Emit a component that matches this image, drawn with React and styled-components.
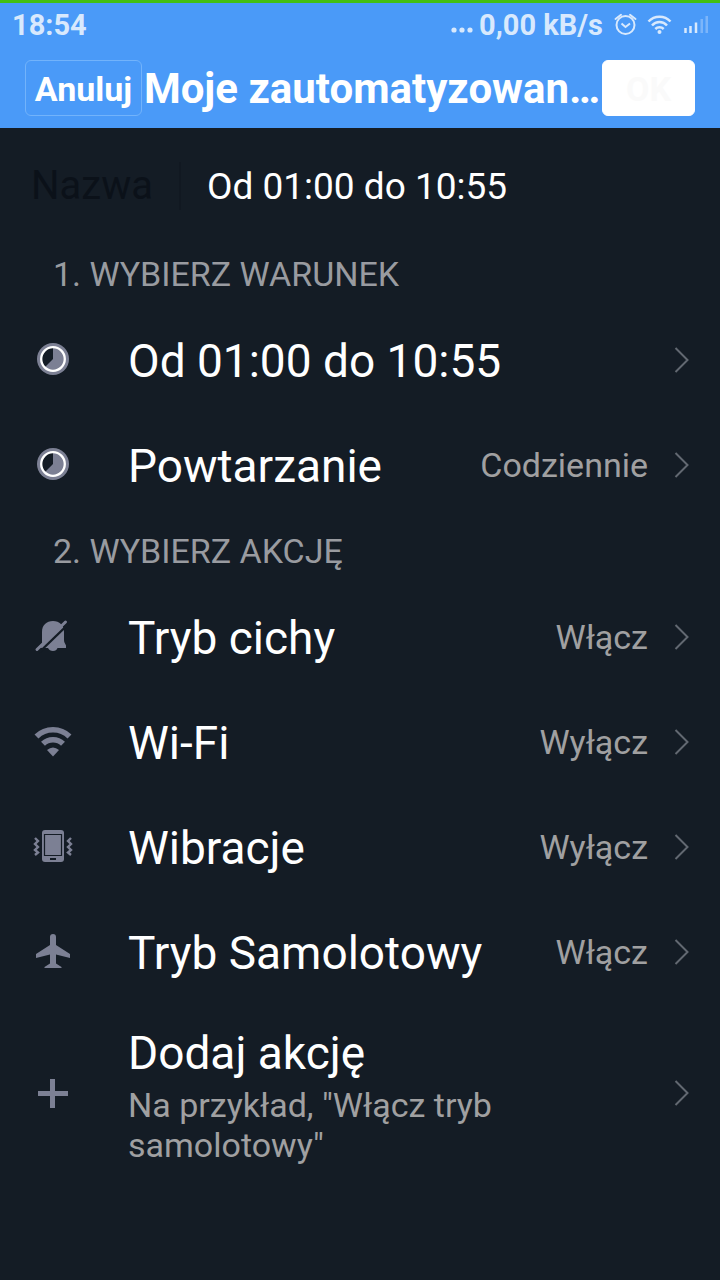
import styled, { createGlobalStyle } from "styled-components";

const GlobalStyle = createGlobalStyle`
  * {
    box-sizing: border-box;
  }

  body {
    margin: 0;
    background: #141c25;
    font-family: Roboto, "Noto Sans", sans-serif;
  }
`;

const Page = styled.div`
  min-height: 100vh;
  color: #fff;
  background: #141c25;
`;

const Header = styled.header`
  height: 128px;
  border-top: 3px solid #43c012;
  background: #4a9af8;
`;

const StatusBar = styled.div`
  display: flex;
  align-items: center;
  height: 44px;
  padding: 0 12px;

  font-size: 29px;
  font-weight: 700;
  line-height: 34px;
  color: #d8e9fd;
`;

const Clock = styled.time`
  flex: 1;
`;

const StatusGroup = styled.div`
  display: flex;
  align-items: center;

  svg {
    display: block;
  }
`;

const Speed = styled.span`
  margin: 0 11px 0 6px;
`;

const TitleBar = styled.div`
  display: flex;
  align-items: center;
  padding: 13px 25px 0;
`;

const Title = styled.h1`
  flex: 1;
  min-width: 0;
  margin: 0;
  padding-top: 2px;

  font-size: 42px;
  font-weight: 700;
  line-height: 54px;
  text-align: center;
  white-space: nowrap;
`;

const HeaderButton = styled.button`
  flex: none;
  height: 56px;
  width: ${(props) => (props.$primary ? 93 : 117)}px;
  padding: 2px 0 0;

  font: 700 34px Roboto, sans-serif;
  color: ${(props) => (props.$primary ? "#fafafa" : "#fff")};

  background: ${(props) => (props.$primary ? "#fff" : "transparent")};
  border: 1px solid ${(props) => (props.$primary ? "#fff" : "#72b3fb")};
  border-radius: 6px;

  cursor: pointer;
`;

const NameField = styled.div`
  display: flex;
  align-items: center;
  height: 112px;
  padding: 4px 31px 0;

  font-size: 37px;
`;

const NameLabel = styled.label`
  width: 150px;
  font-size: 40px;
  line-height: 48px;
  color: #0b1119;
  border-right: 2px solid #111821;
`;

const NameInput = styled.input`
  flex: 1;
  min-width: 0;
  padding: 0 0 0 26px;

  font: inherit;
  color: #fff;

  background: transparent;
  border: 0;
  outline: 0;
`;

const SectionTitle = styled.h2`
  margin: 0;
  padding: 14px 53px 13px;

  font-size: 34px;
  font-weight: 400;
  line-height: 40px;
  color: #999ba0;
`;

const Section = styled.section`
  display: flex;
  flex-direction: column;
`;

const Row = styled.button`
  display: flex;
  align-items: center;
  width: 100%;
  min-height: 105px;
  padding: ${(props) => (props.$tall ? "17px 31px 17px 33px" : "0 31px 0 33px")};

  font-family: inherit;
  text-align: left;
  color: inherit;

  background: none;
  border: 0;

  cursor: pointer;

  svg {
    display: block;
    flex: none;
  }
`;

const RowText = styled.span`
  flex: 1;
  min-width: 0;
  padding-left: 55px;
`;

const RowTitle = styled.span`
  display: block;
  padding-top: 2px;
  font-size: 46px;
  line-height: 60px;
`;

const RowHint = styled.span`
  display: block;
  max-width: 400px;
  margin-top: 2px;
  font-size: 34px;
  line-height: 40px;
  color: #a0a0a1;
`;

const RowValue = styled.span`
  margin-right: 26px;
  font-size: 34px;
  line-height: 40px;
  color: #a0a0a1;
`;

const IconSvg = ({ children }) => (
  <svg width="40" height="40" viewBox="0 0 40 40" fill="#7c8094" aria-hidden="true">
    {children}
  </svg>
);

const TimeIcon = () => (
  <IconSvg>
    <circle cx="20" cy="19" r="16" />
    <circle cx="20" cy="19" r="12" fill="#141c25" />
    <path d="M20 19V7a12 12 0 1 1-8.500 20.500z" />
    <circle cx="20" cy="19" r="11.800" fill="none" stroke="#fff" strokeWidth="2.300" />
  </IconSvg>
);

const SilentIcon = () => (
  <IconSvg>
    <path d="M9 30V15C9 8 13.500 4 20 4S31 8 31 15v8q0 2 1 3.500Q33.500 28 33 31h-8.500q-1 3-4.500 3t-5-3H6z" />
    <path d="M6 35.500 35.500 7" stroke="#141c25" strokeWidth="2.400" />
    <path d="M4 32.500 32.500 5" stroke="#7c8094" strokeWidth="3" strokeLinecap="round" />
  </IconSvg>
);

const WifiIcon = () => (
  <IconSvg>
    <g fill="none" stroke="#7c8094" strokeWidth="5.600">
      <path d="M3.500 14.500a23.500 23.500 0 0 1 33 0" />
      <path d="M10 21.800a14.300 14.300 0 0 1 20 0" />
    </g>
    <path d="M14 28q6-5 12 0l-6 6.500z" />
  </IconSvg>
);

const VibrateIcon = () => (
  <IconSvg>
    <rect x="9" y="3" width="22" height="32" rx="3" />
    <path d="M11.500 7.500h17v21h-17z" fill="none" stroke="#141c25" strokeWidth="1.200" />
    <path d="M17 31h6v2h-6z" fill="#141c25" />
    <path
      d="M2 11l3 3L2 17l3 3L2 23l3 2.500L2 28M38 11l-3 3 3 3-3 3 3 3-3 2.500L38 28"
      fill="none"
      stroke="#7c8094"
      strokeWidth="2.400"
    />
  </IconSvg>
);

const PlaneIcon = () => (
  <IconSvg>
    <path d="M17 5q0-3 3-3t3 3v8l14 9v4l-14-3.500V31.500l5.500 3.500v1h-17v-1l5.500-3.500v-9L3 26v-4l14-9z" />
  </IconSvg>
);

const PlusIcon = () => (
  <IconSvg>
    <path d="M17 6h5v12h13v5H22v12h-5V23H5v-5h12z" />
  </IconSvg>
);

const Chevron = () => (
  <svg width="15" height="28" viewBox="0 0 15 28" fill="none" aria-hidden="true">
    <path d="M1.500 2 13.500 14 1.500 26" stroke="#626871" strokeWidth="2" />
  </svg>
);

const StatusIcons = () => (
  <svg
    width="84"
    height="24"
    viewBox="0 0 84 24"
    fill="none"
    stroke="#d8e9fd"
    strokeWidth="2"
    aria-hidden="true"
  >
    <circle cx="11.500" cy="12" r="9" />
    <path d="m7.500 10.500 4 3.500 4.500-3.500" />
    <path d="M1.500 6 7 1.800M21.500 6 16 1.800" strokeLinecap="round" />
    <path d="M34.500 8.500a15 15 0 0 1 22 0M38 12.500a10 10 0 0 1 15 0M41.300 16a6 6 0 0 1 8.400 0" strokeWidth="2.500" />
    <circle cx="45.500" cy="19" r="2" fill="#d8e9fd" stroke="none" />
    <path d="M71.500 20v-5M76.500 20v-7M82 20V9.500" strokeWidth="2.500" />
  </svg>
);

const SignalRest = () => (
  <svg width="10" height="24" viewBox="0 0 10 24" aria-hidden="true">
    <path d="M2.500 6h2.500v14H2.500zM7.500 3H10v17H7.500z" fill="#7cb5fa" />
  </svg>
);

const OverflowDots = () => (
  <svg width="22" height="24" viewBox="0 0 22 24" fill="#d8e9fd" aria-hidden="true">
    <circle cx="3" cy="17" r="2.600" />
    <circle cx="11" cy="17" r="2.600" />
    <circle cx="19" cy="17" r="2.600" />
  </svg>
);

const conditions = [
  { title: "Od 01:00 do 10:55", Icon: TimeIcon },
  { title: "Powtarzanie", value: "Codziennie", Icon: TimeIcon },
];

const actions = [
  { title: "Tryb cichy", value: "Włącz", Icon: SilentIcon },
  { title: "Wi-Fi", value: "Wyłącz", Icon: WifiIcon },
  { title: "Wibracje", value: "Wyłącz", Icon: VibrateIcon },
  { title: "Tryb Samolotowy", value: "Włącz", Icon: PlaneIcon },
  {
    title: "Dodaj akcję",
    hint: 'Na przykład, "Włącz tryb samolotowy"',
    Icon: PlusIcon,
  },
];

const SettingRow = ({ title, value, hint, Icon }) => (
  <Row type="button" $tall={Boolean(hint)}>
    <Icon />
    <RowText>
      <RowTitle>{title}</RowTitle>
      {hint && <RowHint>{hint}</RowHint>}
    </RowText>
    {value && <RowValue>{value}</RowValue>}
    <Chevron />
  </Row>
);

const App = () => (
  <Page>
    <GlobalStyle />
    <Header>
      <StatusBar>
        <Clock>18:54</Clock>
        <StatusGroup>
          <OverflowDots />
          <Speed>0,00 kB/s</Speed>
          <StatusIcons />
          <SignalRest />
        </StatusGroup>
      </StatusBar>
      <TitleBar>
        <HeaderButton type="button">Anuluj</HeaderButton>
        <Title>Moje zautomatyzowan…</Title>
        <HeaderButton type="button" $primary>
          OK
        </HeaderButton>
      </TitleBar>
    </Header>
    <main>
      <NameField>
        <NameLabel htmlFor="name">Nazwa</NameLabel>
        <NameInput id="name" type="text" defaultValue="Od 01:00 do 10:55" />
      </NameField>
      <Section>
        <SectionTitle>1. WYBIERZ WARUNEK</SectionTitle>
        {conditions.map((item) => (
          <SettingRow key={item.title} {...item} />
        ))}
      </Section>
      <Section>
        <SectionTitle>2. WYBIERZ AKCJĘ</SectionTitle>
        {actions.map((item) => (
          <SettingRow key={item.title} {...item} />
        ))}
      </Section>
    </main>
  </Page>
);

export default App;
